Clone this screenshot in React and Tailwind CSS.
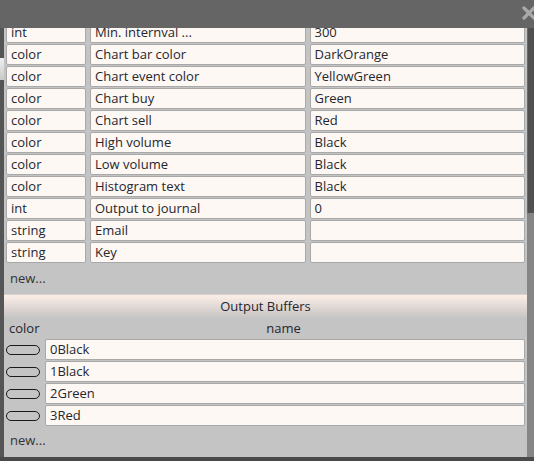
import React from 'react';

const params = [
  { type: 'int', name: 'Min. internval ...', value: '300' },
  { type: 'color', name: 'Chart bar color', value: 'DarkOrange' },
  { type: 'color', name: 'Chart event color', value: 'YellowGreen' },
  { type: 'color', name: 'Chart buy', value: 'Green' },
  { type: 'color', name: 'Chart sell', value: 'Red' },
  { type: 'color', name: 'High volume', value: 'Black' },
  { type: 'color', name: 'Low volume', value: 'Black' },
  { type: 'color', name: 'Histogram text', value: 'Black' },
  { type: 'int', name: 'Output to journal', value: '0' },
  { type: 'string', name: 'Email', value: '' },
  { type: 'string', name: 'Key', value: '' },
];

const buffers = ['0Black', '1Black', '2Green', '3Red'];

const Cell = ({ children }) => (
  <div className="h-[21px] flex items-center px-[4px] bg-[#fdf8f4] border border-[#a8a8a8] rounded-[2px] text-[13px] text-[#26262e] whitespace-nowrap overflow-hidden">
    {children}
  </div>
);

const App = () => {
  return (
    <div
      className="w-[534px] h-[461px] bg-[#4a4a4a] flex flex-col overflow-hidden relative"
      style={{ fontFamily: '"Open Sans", "Noto Sans", sans-serif' }}
    >
      {/* Title bar */}
      <div className="h-[28px] shrink-0 bg-[#656565] relative z-10">
        <svg className="absolute left-[521px] top-[5px]" width="16" height="16" viewBox="0 0 16 16">
          <path d="M3 3 L13 13 M13 3 L3 13" stroke="#a9a9a9" strokeWidth="3.2" strokeLinecap="round" />
        </svg>
      </div>

      <div className="flex flex-1 min-h-0">
        {/* page behind */}
        <div className="w-[4px] shrink-0 bg-[#555] flex flex-col">
          <div className="h-[30px]" />
          <div className="h-[22px] bg-gradient-to-b from-[#f0f0f0] to-[#c8c8c8]" />
        </div>

        {/* Panel */}
        <div className="w-[523px] shrink-0 bg-[#c4c4c4] flex flex-col overflow-hidden">
          <div className="mt-[-6px] px-[2px] flex flex-col gap-[1px]">
            {params.map((p, i) => (
              <div key={i} className="grid grid-cols-[80px_1fr_1fr] gap-[4px]">
                <Cell>{p.type}</Cell>
                <Cell>{p.name}</Cell>
                <Cell>{p.value}</Cell>
              </div>
            ))}
          </div>
          <div className="h-[31px] flex items-center pl-[6px] text-[13px] text-[#333]">new...</div>

          {/* Output Buffers header */}
          <div className="h-[24px] flex items-center justify-center text-[13px] text-[#26262e] border-t border-[#d8d0cc] bg-gradient-to-b from-[#fcefe8] to-[#c6c4c4]">
            Output Buffers
          </div>
          <div className="h-[21px] flex items-center text-[13px] text-[#26262e] px-[5px] pt-[1px]">
            <span className="w-[36px]">color</span>
            <span className="flex-1 text-center">name</span>
          </div>
          <div className="px-[2px] flex flex-col gap-[1px]">
            {buffers.map((b) => (
              <div key={b} className="flex items-center gap-[5px]">
                <div className="w-[34px] h-[10px] rounded-full border-[1.5px] border-[#1a1a1a] shrink-0" />
                <div className="flex-1">
                  <Cell>{b}</Cell>
                </div>
              </div>
            ))}
          </div>
          <div className="h-[29px] flex items-center pl-[6px] text-[13px] text-[#333]">new...</div>
        </div>

        {/* Scrollbar */}
        <div className="flex-1 bg-[#858585] flex flex-col">
          <div className="h-[185px] bg-[#505050] border-l border-[#6a6a6a]" />
        </div>
      </div>

      {/* page behind, bottom */}
      <div className="h-[4px] shrink-0 bg-[#4a4a4a]" />
    </div>
  );
};

export default App;
